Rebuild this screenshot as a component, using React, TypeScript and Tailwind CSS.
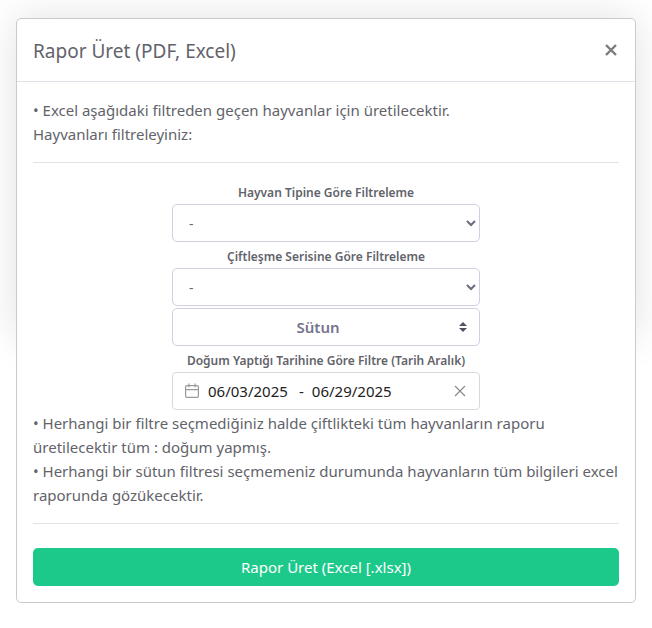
import { useState } from 'react';

const selectClass =
  'block h-[38px] w-full rounded-[5px] border border-[#d1cfe2] bg-white px-3 text-sm text-[#6b6b7b] focus:outline-none';
const labelClass = 'mt-1 block text-center text-[12px] leading-[22px] font-semibold text-[#62636a]';

function CalendarIcon() {
  return (
    <svg viewBox="0 0 16 16" className="h-4 w-4 shrink-0" fill="none" stroke="#999" strokeWidth="1.2">
      <rect x="1.6" y="2.6" width="12.8" height="11.8" rx="1.2" />
      <path d="M1.6 6.6h12.8M4.9 .6v3.6M11.1 .6v3.6" />
    </svg>
  );
}

function SortIcon() {
  return (
    <svg viewBox="0 0 8 10" className="h-[10px] w-2 shrink-0" fill="#4f5060">
      <path d="M4 0 8 4H0zM4 10 0 6h8z" />
    </svg>
  );
}

export default function App() {
  const [open, setOpen] = useState(true);
  const [start, setStart] = useState('06/03/2025');
  const [end, setEnd] = useState('06/29/2025');

  const clearDates = () => {
    setStart('');
    setEnd('');
  };

  if (!open) return null;

  return (
    <div className="relative px-4 pt-[18px] pb-6 font-['Noto_Sans','Open_Sans',sans-serif] text-[15px] leading-6 text-[#62636a]">
      <div className="absolute inset-x-4 top-[18px] h-[320px] rounded-md shadow-[0_0_40px_rgba(0,0,0,0.12)]" />
      <div role="dialog" aria-labelledby="report-title" className="relative rounded-[5px] border border-[#c9cacc] bg-white">
        <header className="flex h-[63px] items-center justify-between border-b border-[#e1e1ea] px-4">
          <h1 id="report-title" className="pt-0.5 text-[19px] leading-7">Rapor Üret (PDF, Excel)</h1>
          <button aria-label="Kapat" onClick={() => setOpen(false)} className="flex h-6 w-4 items-center justify-center">
            <svg viewBox="0 0 12 12" className="h-3 w-3" stroke="#7b7b7b" strokeWidth="2.4">
              <path d="M1 1l10 10M11 1 1 11" />
            </svg>
          </button>
        </header>

        <div className="p-4">
          <p>
            • Excel aşağıdaki filtreden geçen hayvanlar için üretilecektir.
            <br />
            Hayvanları filtreleyiniz:
          </p>
          <hr className="mt-4 mb-[19px] border-[#e3e3e5]" />

          <div className="mx-auto w-full max-w-[308px]">
            <label htmlFor="animal-type" className={labelClass}>Hayvan Tipine Göre Filtreleme</label>
            <select id="animal-type" className={selectClass}>
              <option>-</option>
            </select>

            <label htmlFor="series" className={labelClass}>Çiftleşme Serisine Göre Filtreleme</label>
            <select id="series" className={selectClass}>
              <option>-</option>
            </select>

            <button className="mt-0.5 flex h-[38px] w-full items-center rounded-[5px] border border-[#d1cfe2] pr-3 pl-1 font-semibold text-[#75758a]">
              <span className="flex-1">Sütun</span>
              <SortIcon />
            </button>

            <label htmlFor="start-date" className={labelClass}>Doğum Yaptığı Tarihine Göre Filtre (Tarih Aralık)</label>
            <div className="flex h-[38px] items-center rounded-[4px] border border-[#d9d9d9] px-[11px] text-[#222]">
              <CalendarIcon />
              <input
                id="start-date"
                value={start}
                onChange={e => setStart(e.target.value)}
                className="ml-2 w-[91px] min-w-0 focus:outline-none"
              />
              <span>-</span>
              <input
                aria-label="Bitiş tarihi"
                value={end}
                onChange={e => setEnd(e.target.value)}
                className="ml-2 w-[91px] min-w-0 focus:outline-none"
              />
              <button aria-label="Temizle" onClick={clearDates} className="ml-auto p-0.5">
                <svg viewBox="0 0 12 12" className="h-3 w-3" stroke="#8c8c8c" strokeWidth="1.3">
                  <path d="M1 1l10 10M11 1 1 11" />
                </svg>
              </button>
            </div>
          </div>

          <p className="mt-px">
            • Herhangi bir filtre seçmediğiniz halde çiftlikteki tüm hayvanların raporu üretilecektir tüm : doğum yapmış.
            <br />
            • Herhangi bir sütun filtresi seçmemeniz durumunda hayvanların tüm bilgileri excel raporunda gözükecektir.
          </p>
          <hr className="mt-4 mb-6 border-[#e3e3e5]" />

          <button className="h-[38px] w-full rounded-[5px] bg-[#1dc98a] text-white">Rapor Üret (Excel [.xlsx])</button>
        </div>
      </div>
    </div>
  );
}
